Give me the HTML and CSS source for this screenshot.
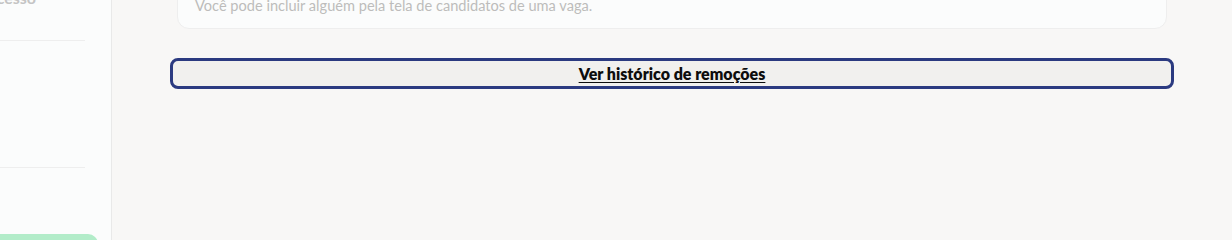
FILE: index.html
```html
<!DOCTYPE html>
<html lang="pt-BR">
<head>
<meta charset="utf-8">
<title>Histórico</title>
<link rel="stylesheet" href="styles.css">
</head>
<body>
<div class="layout">
  <aside class="sidebar">
    <div class="side-title">Sucesso</div>
    <div class="divider first"></div>
    <div class="divider second"></div>
    <div class="side-pill"></div>
  </aside>
  <main class="main">
    <section class="card">
      <p class="card-text">Você pode incluir alguém pela tela de candidatos de uma vaga.</p>
    </section>
    <button class="history-btn" type="button"><span>Ver histórico de remoções</span></button>
  </main>
</div>
</body>
</html>
```

FILE: styles.css
```css
* { box-sizing: border-box; }
html, body {
  margin: 0;
  padding: 0;
  height: 240px;
  overflow: hidden;
  font-family: Lato, "Noto Sans", sans-serif;
}
.layout {
  display: flex;
  height: 240px;
  background: #f8f7f6;
}
.sidebar {
  width: 112px;
  flex: none;
  background: #fbfcfc;
  border-right: 1px solid #e9e9e9;
  display: flex;
  flex-direction: column;
  overflow: hidden;
}
.side-title {
  margin: -11px 0 0 -21px;
  font-size: 16px;
  font-weight: 700;
  color: #c4c4c4;
  line-height: 18px;
  white-space: nowrap;
}
.divider {
  width: 85px;
  height: 1px;
  background: #eeeeee;
  flex: none;
}
.divider.first { margin-top: 33px; }
.divider.second { margin-top: 126px; }
.side-pill {
  margin-top: 66px;
  margin-left: -10px;
  width: 108px;
  height: 30px;
  flex: none;
  background: #b2ecc9;
  border-radius: 10px;
}
.main {
  flex: 1;
  padding: 0 58px 0 58px;
  display: flex;
  flex-direction: column;
}
.card {
  margin: -30px 7px 0 7px;
  background: #fbfcfc;
  border: 1px solid #eeeeee;
  border-radius: 12px;
  padding: 28px 18px 15px 17px;
}
.card-text {
  margin: 0;
  font-size: 14.6px;
  line-height: 14px;
  color: #bdbcbb;
}
.history-btn {
  margin-top: 29px;
  height: 31px;
  width: 100%;
  background: #f1f0ee;
  border: 3px solid #2b3a80;
  border-radius: 8px;
  font-family: Lato, "Noto Sans", sans-serif;
  font-size: 16px;
  font-weight: 800;
  color: #0d0d0d;
  cursor: pointer;
  display: flex;
  align-items: center;
  justify-content: center;
  padding: 0;
}
.history-btn span {
  text-decoration: underline;
  text-underline-offset: 2px;
}
```
